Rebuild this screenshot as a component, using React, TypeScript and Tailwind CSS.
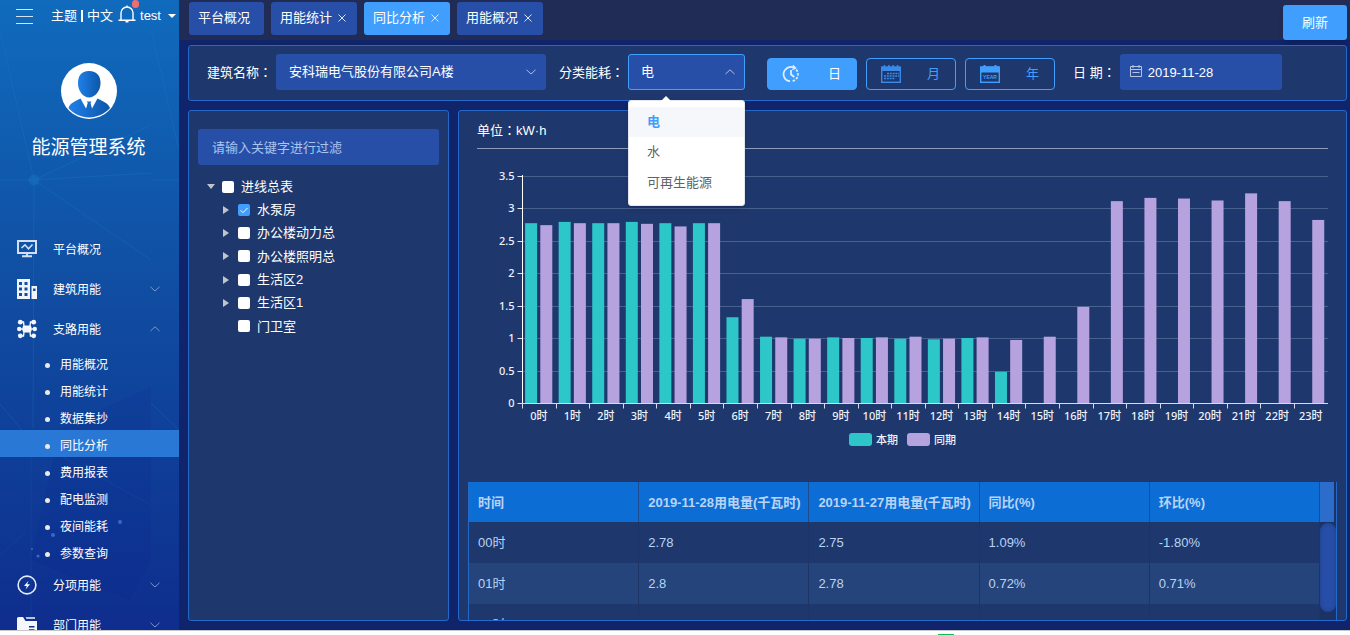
import React from "react";

const FONT =
  "font-['Liberation_Sans','Noto_Sans_CJK_SC',sans-serif]";

function Colon() {
  return <span className="font-['Noto_Sans_CJK_TC',sans-serif]">：</span>;
}

function Chevron({ up = false, className = "" }: { up?: boolean; className?: string }) {
  return (
    <svg viewBox="0 0 10 6" className={"h-[6px] w-[10px] " + className} fill="none" stroke="currentColor" strokeWidth="1">
      <path d={up ? "M0.5 5 L5 0.8 L9.5 5" : "M0.5 0.8 L5 5 L9.5 0.8"} />
    </svg>
  );
}

function MonitorIcon() {
  return (
    <svg viewBox="0 0 20 20" className="h-5 w-5" fill="none" stroke="#d5dff2">
      <rect x="1" y="2" width="18" height="12" strokeWidth="2" />
      <path d="M4.5 9 L8 5.8 L11.5 9.8 L15.5 5.5" strokeWidth="1.6" />
      <path d="M10 14v3M5 17.2h10" strokeWidth="2" />
    </svg>
  );
}

function BuildingIcon() {
  return (
    <svg viewBox="0 0 20 20" className="h-5 w-5" fill="#f0f4fb" fillRule="evenodd">
      <path d="M0 0H13V20H0ZM2 3V6H5V3ZM7.5 3V6H10.5V3ZM2 8.5V11.5H5V8.5ZM7.5 8.5V11.5H10.5V8.5ZM2 14V17H5V14ZM7.5 14V17H10.5V14Z" />
      <path d="M14.5 7H20V20H14.5ZM16 9.5V12H18.5V9.5Z" />
    </svg>
  );
}

function BranchIcon() {
  return (
    <svg viewBox="0 0 20 20" className="h-5 w-5" fill="#f4f7fc">
      <path
        d="M3.5 3H6.5L7 7M16.5 3H13.5L13 7M3.5 17H6.5L7 13M16.5 17H13.5L13 13M2 10H18"
        fill="none"
        stroke="#f4f7fc"
        strokeWidth="1.4"
      />
      <rect x="5.5" y="6.5" width="9" height="7" rx="2" />
      <circle cx="3.3" cy="3.2" r="2.4" />
      <circle cx="16.7" cy="3.2" r="2.4" />
      <circle cx="3.3" cy="16.8" r="2.4" />
      <circle cx="16.7" cy="16.8" r="2.4" />
      <circle cx="2.2" cy="10" r="2.2" />
      <circle cx="17.8" cy="10" r="2.2" />
    </svg>
  );
}

function EnergyIcon() {
  return (
    <svg viewBox="0 0 20 20" className="h-5 w-5" fill="none" stroke="#e4eaf6">
      <circle cx="10" cy="10" r="8.9" strokeWidth="1.6" />
      <path d="M11.5 5.8L7 11H9.8L8.6 14.4L13 9.2H10.2Z" fill="#fff" stroke="none" />
    </svg>
  );
}

function FolderIcon() {
  return (
    <svg viewBox="0 0 20 20" className="h-5 w-5" fill="#f4f7fc">
      <path fillRule="evenodd" d="M0 3.5Q0 2 1.5 2H6L8.5 6H20V20H0ZM12 11V12.6H17.5V11ZM12 14.2V15.8H17.5V14.2Z" />
      <path d="M8.5 2.2H18V3.8H9.5Z" />
    </svg>
  );
}

function ClockIcon() {
  return (
    <svg viewBox="0 0 18 18" className="h-[18px] w-[18px]" fill="none" stroke="#e3f0ff" strokeWidth="1.7">
      <path d="M8 16.2A7 7 0 0 1 3 5A7 7 0 0 1 12.2 2.8" />
      <path d="M14.2 4.6A7 7 0 0 1 9.4 16.2" strokeDasharray="2.4 1.5" />
      <path d="M11 0.3L13.6 3L10.3 4.6" strokeWidth="1.3" />
      <path d="M9 5V9.5L12.3 12" />
    </svg>
  );
}

function MonthIcon() {
  return (
    <svg viewBox="0 0 20 18" className="h-[18px] w-5" fill="none" stroke="#3a8ae8">
      <rect x="0.7" y="2" width="18.6" height="15.3" strokeWidth="1.4" />
      <path d="M1 4H19" strokeWidth="4" />
      <path d="M3.5 0V4M7.8 0V4M12.2 0V4M16.5 0V4" strokeWidth="1.4" />
      <path d="M6 8.5H18M3 11H18M3 13.5H14" strokeWidth="1.7" strokeDasharray="2 0.8" />
    </svg>
  );
}

function YearIcon() {
  return (
    <svg viewBox="0 0 20 18" className="h-[18px] w-5">
      <rect x="0.7" y="2" width="18.6" height="15.3" fill="none" stroke="#409eff" strokeWidth="1.4" />
      <path d="M1 1.5H19V7.5H1Z" fill="#409eff" />
      <path d="M4.5 0V3M15.5 0V3" stroke="#409eff" strokeWidth="2" />
      <text x="10" y="13.8" textAnchor="middle" fontSize="5" fontWeight="bold" fill="#409eff">
        YEAR
      </text>
    </svg>
  );
}

function Avatar() {
  return (
    <svg viewBox="0 0 56 56" className="h-14 w-14">
      <defs>
        <linearGradient id="person" x1="0" x2="1" y1="0" y2="0">
          <stop offset="0" stopColor="#1f80ea" />
          <stop offset="1" stopColor="#0d56a8" />
        </linearGradient>
      </defs>
      <circle cx="28" cy="28" r="28" fill="#fff" />
      <path d="M28 8C36 8 39.5 13 39.5 20C39.5 28 34 34.5 28 34.5C22 34.5 17 28 17 20C17 13 20 8 28 8Z" fill="url(#person)" />
      <path d="M7.5 45C9 40 14 38.5 19.5 35.5L25 45.5L27 40L25.5 38.5H30.5L29.5 40L31 45.5L36.5 35.5C42 38.5 47 40 49 45C38 57.5 18 57.5 7.5 45Z" fill="url(#person)" />
      <path d="M26.8 40H29L30 46H25.8Z" fill="#1568c4" />
    </svg>
  );
}

function SidebarPattern() {
  return (
    <svg
      aria-hidden="true"
      viewBox="0 0 179 630"
      preserveAspectRatio="none"
      className="pointer-events-none absolute inset-0 h-full w-full"
      fill="none"
      stroke="#1c7fc4"
      strokeOpacity="0.3"
    >
      <path d="M0 30L34 180L151 125M34 180L151 173M34 180L151 260M0 180H34L33 428M151 180H179M151 30L179 150M0 404L22 430M151 403L179 430" />
      <path d="M50 450L151 505M0 555L25 533M31 456V630" strokeOpacity="0.15" />
      <circle cx="34" cy="180" r="5.5" fill="#1c7fc4" fillOpacity="0.35" stroke="none" />
      <path d="M151 387L60 428L31 560L130 600L151 560Z" fill="#0b1f8a" fillOpacity="0.12" stroke="none" />
      <g fill="#4f7fd6" fillOpacity="0.7" stroke="none">
        <circle cx="120" cy="522" r="2" />
        <circle cx="53" cy="535" r="2" />
        <circle cx="38" cy="556" r="1.6" />
        <circle cx="32" cy="549" r="1" />
      </g>
    </svg>
  );
}

function MenuItem({ icon, label, arrow }: { icon: React.ReactNode; label: string; arrow?: "up" | "down" }) {
  return (
    <a href="#" className="flex h-10 shrink-0 items-center pl-[17px] pr-[19px]">
      {icon}
      <span className="ml-4 flex-1 pt-[2px]">{label}</span>
      {arrow && <Chevron up={arrow === "up"} className="text-[#7b98c4]" />}
    </a>
  );
}

const subItems = ["用能概况", "用能统计", "数据集抄", "同比分析", "费用报表", "配电监测", "夜间能耗", "参数查询"];

function Sidebar() {
  return (
    <aside className="relative flex w-[179px] shrink-0 flex-col overflow-hidden bg-linear-to-b from-[#106bbd] via-[#104ba0] to-[#0f2d8e] text-xs text-white">
      <SidebarPattern />
      <header className="relative flex h-8 shrink-0 items-center pl-4 text-[13px]">
        <button aria-label="菜单" className="flex w-[17px] flex-col gap-[6px]">
          <span className="h-px w-full bg-[#d5e5f5]" />
          <span className="h-px w-full bg-[#d5e5f5]" />
          <span className="h-px w-full bg-[#d5e5f5]" />
        </button>
        <a href="#" className="ml-[18px]">主题</a>
        <span className="mx-1 h-3 w-[2px] bg-white" />
        <a href="#">中文</a>
        <button aria-label="通知" className="relative ml-[5px] mb-[4px]">
          <svg viewBox="0 0 18 18" className="h-[18px] w-[18px]" fill="none" stroke="#fff" strokeWidth="1.4">
            <path d="M0.5 15.3H17.5M3 15V8A6 6 0 0 1 15 8V15M9 0.5V2M7.5 16.8H10.5" />
          </svg>
          <span className="absolute -top-[5px] left-[14px] h-2 w-[7px] rounded-full bg-[#f56c6c]" />
        </button>
        <button className="ml-[4px] flex items-center">
          test
          <span className="ml-[7px] border-x-4 border-t-4 border-x-transparent border-t-white" />
        </button>
      </header>
      <div className="relative flex h-[197px] shrink-0 flex-col items-center pr-[2px] pt-[31px]">
        <Avatar />
        <h1 className="mt-[15px] text-[19px] leading-7">能源管理系统</h1>
      </div>
      <nav className="relative flex flex-col">
        <MenuItem icon={<MonitorIcon />} label="平台概况" />
        <MenuItem icon={<BuildingIcon />} label="建筑用能" arrow="down" />
        <MenuItem icon={<BranchIcon />} label="支路用能" arrow="up" />
        {subItems.map((s) => (
          <a
            key={s}
            href="#"
            className={"flex h-[27px] shrink-0 items-center pl-[45px] pt-[5px] " + (s === "同比分析" ? "bg-[#2a78d6]" : "")}
          >
            <span className="mr-[10px] h-[5px] w-[5px] rounded-full bg-[#eceae6]" />
            {s}
          </a>
        ))}
        <MenuItem icon={<EnergyIcon />} label="分项用能" arrow="down" />
        <MenuItem icon={<FolderIcon />} label="部门用能" arrow="down" />
      </nav>
    </aside>
  );
}

const tabs = [
  { label: "平台概况", closable: false },
  { label: "用能统计", closable: true },
  { label: "同比分析", closable: true },
  { label: "用能概况", closable: true },
];

function TabBar() {
  return (
    <div className="flex h-10 shrink-0 items-end justify-between bg-[#212c56] pl-[10px] pr-[3px]">
      <div className="flex gap-[7px] self-start pt-[2px]">
        {tabs.map((t) => (
          <button
            key={t.label}
            className={
              "flex h-[33px] min-w-[75px] items-center rounded-[3px] pb-[2px] pl-[9px] pr-[11px] text-white " +
              (t.label === "同比分析" ? "bg-[#409eff]" : "bg-[#284fa8]")
            }
          >
            {t.label}
            {t.closable && (
              <svg viewBox="0 0 8 8" className="ml-[6px] h-2 w-2" stroke="#dbe5fa" fill="none">
                <path d="M0.5 0.5L7.5 7.5M7.5 0.5L0.5 7.5" />
              </svg>
            )}
          </button>
        ))}
      </div>
      <button className="h-[35px] w-16 rounded-[3px] bg-[#409eff] text-white shadow-md">刷新</button>
    </div>
  );
}

function EnergyMenu() {
  return (
    <div className="absolute left-0 top-[46px] z-10 w-full rounded-[3px] border border-[#e4e7ed] bg-white py-[6px] text-[#606266] shadow-md">
      <span className="absolute -top-[5px] left-8 border-x-[5px] border-b-[5px] border-x-transparent border-b-white" />
      <ul role="listbox" aria-label="能耗类型">
        <li role="option" aria-selected="true" className="flex h-[30px] items-center bg-[#f5f7fa] pl-[18px] font-bold text-[#409eff]">
          电
        </li>
        <li role="option" aria-selected="false" className="flex h-[30px] items-center pl-[18px]">
          水
        </li>
        <li role="option" aria-selected="false" className="flex h-[32px] items-center pl-[18px]">
          可再生能源
        </li>
      </ul>
    </div>
  );
}

const periodClass =
  "flex h-8 w-[90px] items-center justify-between rounded-[4px] border border-[#409eff] pl-[14px] pr-[15px] ";

function FilterBar() {
  return (
    <section className="flex h-14 shrink-0 items-center rounded-[3px] border border-[#2468c8] bg-[#1e386e] pb-[2px] pl-[18px] text-white">
      <label htmlFor="building">
        建筑名称<Colon />
      </label>
      <div className="relative ml-[4px] w-[270px]">
        <select id="building" className="h-9 w-full appearance-none rounded-[3px] bg-[#284fa8] pl-[13px] outline-none">
          <option>安科瑞电气股份有限公司A楼</option>
        </select>
        <Chevron className="pointer-events-none absolute right-[10px] top-[15px] text-[#b4bfd8]" />
      </div>
      <label htmlFor="energy" className="ml-[13px]">
        分类能耗<Colon />
      </label>
      <div className="relative ml-[4px] w-[117px]">
        <select id="energy" className="h-9 w-full appearance-none rounded-[3px] border border-[#409eff] bg-[#284fa8] pl-3 outline-none">
          <option>电</option>
          <option>水</option>
          <option>可再生能源</option>
        </select>
        <Chevron up className="pointer-events-none absolute right-[10px] top-[15px] text-[#b4bfd8]" />
        <EnergyMenu />
      </div>
      <div className="ml-[22px] flex gap-[9px] pt-[4px] text-[#409eff]">
        <button className={periodClass + "bg-[#409eff] text-white"}>
          <ClockIcon />日
        </button>
        <button className={periodClass}>
          <MonthIcon />月
        </button>
        <button className={periodClass}>
          <YearIcon />年
        </button>
      </div>
      <label htmlFor="date" className="ml-[18px]">
        日 期<Colon />
      </label>
      <div className="relative ml-[4px] w-[162px]">
        <input id="date" type="text" defaultValue="2019-11-28" className="h-9 w-full rounded-[3px] bg-[#284fa8] pl-[28px] outline-none" />
        <svg viewBox="0 0 12 12" className="pointer-events-none absolute left-[10px] top-[11px] h-3 w-3" fill="none" stroke="#b8c4dd">
          <path d="M0.5 1.5H11.5V11.5H0.5ZM0.5 4.5H11.5M3 0V3M9 0V3M2.5 7.5H9.5" />
        </svg>
      </div>
    </section>
  );
}

const tree = [
  { label: "进线总表", level: 0, expandable: true, checked: false },
  { label: "水泵房", level: 1, expandable: true, checked: true },
  { label: "办公楼动力总", level: 1, expandable: true, checked: false },
  { label: "办公楼照明总", level: 1, expandable: true, checked: false },
  { label: "生活区2", level: 1, expandable: true, checked: false },
  { label: "生活区1", level: 1, expandable: true, checked: false },
  { label: "门卫室", level: 1, expandable: false, checked: false },
];

function TreePanel() {
  return (
    <section className="w-[261px] shrink-0 rounded-[3px] border border-[#2468c8] bg-[#1e386e] px-[9px] pt-[18px] text-white">
      <input
        aria-label="关键字"
        placeholder="请输入关键字进行过滤"
        className="h-9 w-full rounded-[3px] bg-[#284fa8] pl-[14px] outline-none placeholder:text-[#a9c4ee]"
      />
      <ul className="mt-[10px] flex h-[163px] flex-col">
        {tree.map((n) => (
          <li key={n.label} className={"flex flex-1 items-center " + (n.level ? "pl-[25px]" : "pl-[9px]")}>
            <span className="flex w-[15px] shrink-0">
              {n.expandable &&
                (n.level ? (
                  <span className="border-y-4 border-l-[6px] border-y-transparent border-l-[#c0c4cc]" />
                ) : (
                  <span className="border-x-4 border-t-[5px] border-x-transparent border-t-[#c0c4cc]" />
                ))}
            </span>
            <label className="flex items-center">
              <span className="relative mr-[7px] flex h-3 w-3">
                <input
                  type="checkbox"
                  defaultChecked={n.checked}
                  className="peer h-3 w-3 appearance-none rounded-[2px] bg-white checked:bg-[#409eff]"
                />
                <svg viewBox="0 0 12 12" className="pointer-events-none absolute inset-0 hidden peer-checked:block" fill="none" stroke="#fff">
                  <path d="M2.5 6.2L5 8.7L9.5 4" />
                </svg>
              </span>
              {n.label}
            </label>
          </li>
        ))}
      </ul>
    </section>
  );
}

const current = [2.78, 2.8, 2.78, 2.8, 2.78, 2.78, 1.33, 1.03, 1.0, 1.02, 1.01, 1.0, 0.99, 1.01, 0.49];
const previous = [
  2.75, 2.78, 2.78, 2.77, 2.73, 2.78, 1.61, 1.02, 1.0, 1.01, 1.02, 1.03, 1.0, 1.02, 0.98, 1.03, 1.49, 3.12, 3.17, 3.16,
  3.13, 3.24, 3.12, 2.83,
];
const X0 = 63.5;
const X1 = 869;
const Y0 = 247.5;
const UNIT = 64.86;
const STEP = (X1 - X0) / 24;

function Chart() {
  const ticks = [0, 0.5, 1, 1.5, 2, 2.5, 3, 3.5];
  return (
    <svg viewBox="0 0 887 326" className="block h-auto w-full font-['Noto_Sans','Noto_Sans_CJK_SC',sans-serif]" role="img" aria-label="同比分析图">
      <g fill="#f0f2f7" fontSize="11" fontWeight="500">
        {ticks.map((t) => {
          const y = Math.floor(Y0 - t * UNIT) + 0.5;
          return (
            <g key={t}>
              {t > 0 && <path d={`M${X0} ${y}H${X1}`} stroke="#48608e" />}
              <path d={`M${X0 - 5} ${y}H${X0}`} stroke="#e3e7f0" />
              <text x={X0 - 8} y={y + 3.5} textAnchor="end">
                {t}
              </text>
            </g>
          );
        })}
        {previous.map((_, i) => (
          <text key={i} x={X0 + (i + 0.5) * STEP - 0.5} y={Y0 + 16} textAnchor="middle">
            {i}时
          </text>
        ))}
      </g>
      {current.map((v, i) => (
        <rect key={i} x={X0 + i * STEP + 2.6} y={Y0 - v * UNIT} width="12" height={v * UNIT} fill="#2ec7c9" />
      ))}
      {previous.map((v, i) => (
        <rect key={i} x={X0 + i * STEP + 17.8} y={Y0 - v * UNIT} width="12" height={v * UNIT} fill="#b6a2de" />
      ))}
      <path d={`M${X0} 19V${Y0}`} stroke="#fff" />
      <path d={`M${X0} ${Y0}H${X1}`} stroke="#d5dbe8" />
      {Array.from({ length: 24 }, (_, i) => (
        <path key={i} d={`M${Math.floor(X0 + i * STEP) + 0.5} ${Y0}v5`} stroke="#d5dbe8" />
      ))}
      <g fill="#f0f2f7" fontSize="11" fontWeight="500">
        <rect x="390" y="277" width="23" height="13" rx="3" fill="#2ec7c9" />
        <text x="417" y="287.5">本期</text>
        <rect x="448" y="277" width="23" height="13" rx="3" fill="#b6a2de" />
        <text x="475" y="287.5">同期</text>
      </g>
    </svg>
  );
}

const columns = ["时间", "2019-11-28用电量(千瓦时)", "2019-11-27用电量(千瓦时)", "同比(%)", "环比(%)"];
const rows = [
  ["00时", "2.78", "2.75", "1.09%", "-1.80%"],
  ["01时", "2.8", "2.78", "0.72%", "0.71%"],
  ["02时", "2.78", "2.78", "0.00%", "-0.71%"],
];

function DataTable() {
  return (
    <div className="mx-[9px] flex border-x border-[#2468c8]">
      <div className="min-w-0 flex-1">
        <table className="w-full table-fixed border-separate border-spacing-0 text-left text-[#b9d3f5]">
          <thead>
            <tr className="h-10 bg-[#0c6dd5]">
              {columns.map((c) => (
                <th key={c} className="whitespace-nowrap border-r border-[#1e4a8e] pl-[9px] pt-[2px] font-bold">
                  {c}
                </th>
              ))}
            </tr>
          </thead>
          <tbody>
            {rows.map((r, i) => (
              <tr key={r[0]} className={"h-[41px] " + (i % 2 ? "bg-[#24447b]" : "bg-[#1e386e]")}>
                {r.map((v, j) => (
                  <td key={j} className="border-r border-[#1d3566] pl-[9px] pt-px">
                    {v}
                  </td>
                ))}
              </tr>
            ))}
          </tbody>
        </table>
      </div>
      <div className="flex w-4 shrink-0 flex-col bg-[#1b3264]">
        <div className="mr-[2px] h-10 bg-[#2c6ccb]" />
        <div className="mt-px h-[89px] rounded-full bg-[#284fa8] shadow-[inset_0_0_4px_#1d3c88]" />
      </div>
    </div>
  );
}

function ResultPanel() {
  return (
    <section className="min-w-0 flex-1 overflow-hidden rounded-[3px] border border-[#2468c8] bg-[#1e386e]">
      <div className="mx-[18px] h-[38px] border-b border-[#8d9ab8] pt-[9px] leading-5 text-white">
        单位<Colon />kW·h
      </div>
      <div className="mt-[7px]">
        <Chart />
      </div>
      <DataTable />
    </section>
  );
}

export default function App() {
  return (
    <div className={"flex h-screen flex-col overflow-hidden bg-white text-[13px] " + FONT}>
      <div className="flex min-h-0 flex-1">
        <Sidebar />
        <main className="flex min-w-0 flex-1 flex-col bg-[#0f246a]">
          <TabBar />
          <div className="flex min-h-0 flex-1 flex-col gap-[9px] pb-[9px] pl-[9px] pr-[3px] pt-[5px]">
            <FilterBar />
            <div className="flex min-h-0 flex-1 gap-[9px]">
              <TreePanel />
              <ResultPanel />
            </div>
          </div>
        </main>
      </div>
      <div className="flex h-[5px] shrink-0 items-end border-t border-[#c8c8c8] pl-[938px]">
        <span className="h-px w-4 bg-[#10b95a]" />
      </div>
    </div>
  );
}
